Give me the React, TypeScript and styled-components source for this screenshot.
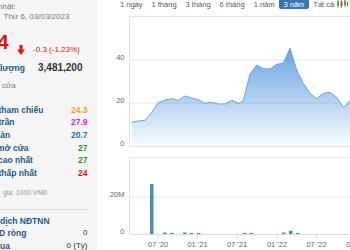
import styled, { createGlobalStyle } from "styled-components";

const GlobalStyle = createGlobalStyle`
	html, body { margin: 0; padding: 0; background: #fff; }
	body { font-family: "Liberation Sans", Arial, sans-serif; }
`;

const tabs = ["1 ngày", "1 tháng", "3 tháng", "6 tháng", "1 năm", "3 năm", "Tất cả"];

const stats = [
	{ label: "tham chiếu", cut: 1.5, value: "24.3", color: "#f0a11f" },
	{ label: "trần", cut: 1.5, value: "27.9", color: "#e01fe0" },
	{ label: "sàn", cut: 4.5, value: "20.7", color: "#1f6fa8" },
	{ label: "mở cửa", cut: 3, value: "27", color: "#1d9a1d" },
	{ label: "cao nhất", cut: 2, value: "27", color: "#1d9a1d" },
	{ label: "thấp nhất", cut: 1.5, value: "24", color: "#e4160e" },
];

const foreign = [
	{ label: "dịch NĐTNN", cut: 0, value: "" },
	{ label: "D ròng", cut: 1, value: "0" },
	{ label: "ua", cut: 0, value: "0 (Tỷ)" },
];

// price points in local svg coords (x, y)
const pricePts: [number, number][] = [
	[34.7, 106.3], [41.3, 105], [48, 104.3], [54.7, 96.7], [61.3, 86.7], [68, 84], [74.7, 82.7],
	[81.3, 84.3], [88, 80], [94.7, 82], [101.3, 83.7], [108, 87.3], [114.7, 86.3], [121.3, 88],
	[128, 88], [134.7, 84.3], [141.3, 87.3], [146.3, 85], [153, 58], [159.7, 49], [166.3, 52.7],
	[173, 53], [179.7, 48.3], [186.3, 47.3], [193, 32.3], [199.7, 54], [206.3, 67.3], [213, 77.3],
	[219.7, 82.7], [226.3, 77.3], [233, 76.3], [239.7, 81.3], [246.3, 91.3], [253, 84.7],
];

const volBars: [number, number][] = [
	[53, 50], [66, 1.5], [73, 1], [86, 1.5], [92.5, 1], [100, 1], [146, 1], [152.5, 1],
	[185, 1.5], [192, 3.2], [199, 1],
];

const ticks = [
	{ x: 61, label: "07 '20" },
	{ x: 100.5, label: "01 '21" },
	{ x: 140, label: "07 '21" },
	{ x: 180, label: "01 '22" },
	{ x: 219.5, label: "07 '22" },
	{ x: 259, label: "01 '23" },
];

export default function App() {
	const line = pricePts.map(([x, y], i) => `${i ? "L" : "M"}${x} ${y}`).join(" ");
	const area = `${line} L253 130 L34.7 130 Z`;

	return (
		<>
			<GlobalStyle />
			<Page>
				<Side>
					<Muted $indent={-2}>nhật:</Muted>
					<Muted $indent={3.5}>Thứ 6, 03/03/2023</Muted>
					<PriceRow>
						<Price>24</Price>
						<DownArrow width='8' height='10' viewBox='0 0 8 10'>
							<rect x='2.5' y='0' width='3' height='5' fill='#e4160e' />
							<path d='M0 4.5 H8 L4 10 Z' fill='#e4160e' />
						</DownArrow>
						<Change>-0.3 (-1.23%)</Change>
					</PriceRow>
					<VolumeRow>
						<VolumeLabel>lượng</VolumeLabel>
						<VolumeValue>3,481,200</VolumeValue>
					</VolumeRow>
					<Muted $indent={2} $top={7}>
						cửa
					</Muted>
					<List $top={13.15}>
						{stats.map((s) => (
							<StatRow key={s.label}>
								<StatLabel $cut={s.cut}>{s.label}</StatLabel>
								<StatValue $color={s.color}>{s.value}</StatValue>
							</StatRow>
						))}
					</List>
					<UnitNote>giá: 1000 VNĐ</UnitNote>
					<Divider />
					<List $top={4.15}>
						{foreign.map((f) => (
							<StatRow key={f.label}>
								<StatLabel $cut={f.cut}>{f.label}</StatLabel>
								<PlainValue>{f.value}</PlainValue>
							</StatRow>
						))}
					</List>
				</Side>

				<Main>
					<Tabs>
						{tabs.map((t) => (
							<Tab key={t} $active={t === "3 năm"}>
								{t}
							</Tab>
						))}
						<CandleIcon width='11' height='9' viewBox='0 0 11 9'>
							<line x1='1' y1='0' x2='1' y2='9' stroke='#4caf50' strokeWidth='0.8' />
							<rect x='0' y='2' width='2' height='5' fill='#4caf50' />
							<line x1='4.5' y1='1' x2='4.5' y2='9' stroke='#e53935' strokeWidth='0.8' />
							<rect x='3.5' y='3' width='2' height='4' fill='#e53935' />
							<line x1='8' y1='0' x2='8' y2='8' stroke='#4caf50' strokeWidth='0.8' />
							<rect x='7' y='1.5' width='2' height='5' fill='#4caf50' />
							<rect x='10' y='3' width='1' height='4' fill='#e53935' />
						</CandleIcon>
					</Tabs>

					<ChartSvg $top={7.5} width='253' height='132' viewBox='0 0 253 132'>
						<defs>
							<linearGradient id='priceFill' x1='0' y1='0' x2='0' y2='1'>
								<stop offset='0' stopColor='#5f9fe0' stopOpacity='0.95' />
								<stop offset='1' stopColor='#5f9fe0' stopOpacity='0.04' />
							</linearGradient>
						</defs>
						<line x1='32.5' y1='0.5' x2='253' y2='0.5' stroke='#e3e3e3' />
						<line x1='32.5' y1='44' x2='253' y2='44' stroke='#e6e6e6' />
						<line x1='32.5' y1='87' x2='253' y2='87' stroke='#e6e6e6' />
						<line x1='32.5' y1='130.5' x2='253' y2='130.5' stroke='#e3e3e3' />
						<line x1='32.5' y1='0.5' x2='32.5' y2='130.5' stroke='#e3e3e3' />
						<path d={area} fill='url(#priceFill)' />
						<path d={line} fill='none' stroke='#6aa5e0' strokeWidth='1' />
						<AxisText x='27.5' y='44' textAnchor='end'>40</AxisText>
						<AxisText x='27.5' y='87' textAnchor='end'>20</AxisText>
						<AxisText x='27.5' y='130' textAnchor='end'>0</AxisText>
					</ChartSvg>

					<ChartSvg $top={9} width='253' height='93' viewBox='0 0 253 93'>
						<line x1='32.5' y1='0.5' x2='253' y2='0.5' stroke='#e3e3e3' />
						<line x1='32.5' y1='0.5' x2='32.5' y2='77' stroke='#e3e3e3' />
						<line x1='32.5' y1='40' x2='253' y2='40' stroke='#e6e6e6' />
						{volBars.map(([x, h]) => (
							<rect key={x} x={x} y={77 - h} width='3.5' height={h} fill='#4f8db0' />
						))}
						<line x1='32.5' y1='77.5' x2='253' y2='77.5' stroke='#d5dde8' />
						{ticks.map((t) => (
							<g key={t.label}>
								<line x1={t.x} y1='77.5' x2={t.x} y2='82' stroke='#d5dde8' />
								<AxisText x={t.x} y='90' textAnchor='middle'>
									{t.label}
								</AxisText>
							</g>
						))}
						<AxisText x='27.5' y='39.5' textAnchor='end'>20M</AxisText>
						<AxisText x='27.5' y='77' textAnchor='end'>0</AxisText>
					</ChartSvg>
				</Main>
			</Page>
		</>
	);
}

const Page = styled.div`
	width: 350px;
	height: 250px;
	display: flex;
	overflow: hidden;
	background: #fff;
`;

const Side = styled.aside`
	flex: none;
	width: 97px;
	box-sizing: border-box;
	padding: 2px 9.5px 0 0;
	background: #f5f5f5;
	display: flex;
	flex-direction: column;
	overflow: hidden;
	white-space: nowrap;
`;

const Muted = styled.div<{ $indent?: number; $top?: number }>`
	font-size: 8px;
	line-height: 9.5px;
	color: #777;
	margin-left: ${(p) => p.$indent ?? 0}px;
	margin-top: ${(p) => p.$top ?? 0}px;
`;

const PriceRow = styled.div`
	flex: none;
	display: flex;
	align-items: flex-end;
	height: 31px;
`;

const Price = styled.span`
	font-size: 20px;
	line-height: 20px;
	font-weight: 700;
	color: #e4160e;
	margin-left: -13.5px;
`;

const DownArrow = styled.svg`
	flex: none;
	margin: 0 0 -2.5px 8.3px;
`;

const Change = styled.span`
	font-size: 8px;
	line-height: 10px;
	color: #e4160e;
	margin: 0 0 -3.2px 8px;
`;

const VolumeRow = styled.div`
	flex: none;
	display: flex;
	align-items: baseline;
	height: 12px;
	margin-top: 10px;
`;

const VolumeLabel = styled.span`
	flex: none;
	width: 38px;
	font-size: 8.5px;
	font-weight: 700;
	color: #26598a;
`;

const VolumeValue = styled.span`
	font-size: 10px;
	line-height: 12px;
	font-weight: 700;
	color: #333;
`;

const List = styled.div<{ $top: number }>`
	display: flex;
	flex-direction: column;
	margin-top: ${(p) => p.$top}px;
`;

const StatRow = styled.div`
	display: flex;
	justify-content: space-between;
	align-items: center;
	height: 12.7px;
	line-height: 12.7px;
	font-size: 8.5px;
`;

const StatLabel = styled.span<{ $cut: number }>`
	font-weight: 700;
	color: #26598a;
	margin-left: ${(p) => -p.$cut}px;
`;

const StatValue = styled.span<{ $color: string }>`
	font-weight: 700;
	color: ${(p) => p.$color};
`;

const PlainValue = styled.span`
	font-size: 8px;
	color: #333;
`;

const UnitNote = styled.div`
	font-size: 6.8px;
	line-height: 9px;
	color: #999;
	margin: 8.15px 0 0 3px;
`;

const Divider = styled.div`
	flex: none;
	height: 1px;
	margin-top: 12.5px;
	background: #e2e2e2;
`;

const Main = styled.main`
	flex: 1;
	min-width: 0;
	display: flex;
	flex-direction: column;
`;

const Tabs = styled.nav`
	flex: none;
	display: flex;
	align-items: center;
	height: 10px;
	margin-top: -1.5px;
	padding-left: 18.5px;
	white-space: nowrap;
`;

const Tab = styled.span<{ $active?: boolean }>`
	height: 10px;
	line-height: 11px;
	padding: 0 4.5px;
	font-size: 7.5px;
	border-radius: 2px;
	color: ${(p) => (p.$active ? "#fff" : "#4d5b69")};
	background: ${(p) => (p.$active ? "#3a76b6" : "transparent")};
`;

const CandleIcon = styled.svg`
	flex: none;
	margin-left: -1.5px;
`;

const ChartSvg = styled.svg<{ $top: number }>`
	display: block;
	flex: none;
	margin-top: ${(p) => p.$top}px;
	overflow: hidden;
`;

const AxisText = styled.text`
	font-family: "Liberation Sans", Arial, sans-serif;
	font-size: 7.5px;
	fill: #666;
`;
